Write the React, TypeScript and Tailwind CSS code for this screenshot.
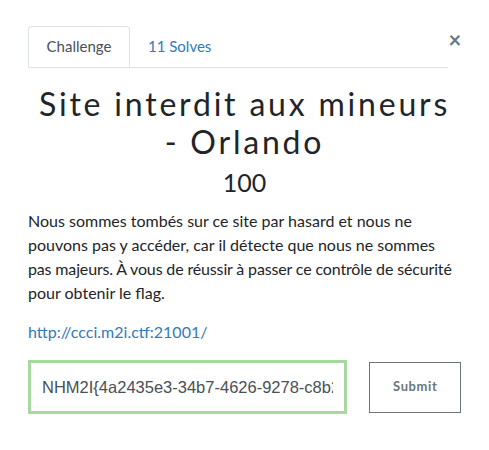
import React, { useState } from 'react';

const App: React.FC = () => {
  const [tab, setTab] = useState<'challenge' | 'solves'>('challenge');
  const [flag, setFlag] = useState('NHM2I{4a2435e3-34b7-4626-9278-c8b2c0d1');

  return (
    <div className="w-[489px] h-[450px] bg-white font-['Lato','Liberation_Sans',sans-serif] text-[#212529] overflow-hidden">
      <div className="px-[28px] pt-[26px]">
        <div className="flex items-start">
          <div className="flex w-[420px] border-b border-[#dee2e6]">
            <button
              onClick={() => setTab('challenge')}
              className="h-[41px] w-[102px] -mb-px rounded-t-[4px] border border-[#dee2e6] border-b-white bg-white text-[15px] text-[#495057]"
            >
              Challenge
            </button>
            <button
              onClick={() => setTab('solves')}
              className="h-[41px] px-[18px] text-[15px] text-[#337ab7]"
            >
              11 Solves
            </button>
          </div>
          <button className="-mr-px mt-[3px] w-[14px] text-[22px] font-bold leading-none text-[#6c757d]">
            ×
          </button>
        </div>

        {tab === 'challenge' && (
          <div>
            <h2 className="mt-[17px] text-center text-[32px] leading-[38px] tracking-[2.8px] text-[#212529]">
              Site interdit aux mineurs - Orlando
            </h2>
            <h3 className="mt-[6px] text-center text-[25px] leading-[30px] text-[#212529]">100</h3>
            <p className="-mr-[28px] mt-[12px] whitespace-nowrap text-[16px] leading-[24px] text-[#212529]">
              Nous sommes tombés sur ce site par hasard et nous ne
              <br />
              pouvons pas y accéder, car il détecte que nous ne sommes
              <br />
              <span className="tracking-[-0.15px]">pas majeurs. À vous de réussir à passer ce contrôle de sécurité</span>
              <br />
              pour obtenir le flag.
            </p>
            <a href="#" className="mt-[15px] block text-[16px] leading-[24px] text-[#337ab7]">
              http://ccci.m2i.ctf:21001/
            </a>
            <div className="mt-[16px] flex items-center gap-[22px]">
              <input
                value={flag}
                onChange={(e) => setFlag(e.target.value)}
                className="h-[54px] w-[321px] border-[3px] border-[#a6d8a0] px-[11px] text-[16.5px] text-[#495057] font-['Liberation_Sans',sans-serif] outline-none"
              />
              <button className="h-[51px] w-[92px] border border-[#6c757d] text-[13px] font-bold tracking-[0.6px] text-[#6c757d]">
                Submit
              </button>
            </div>
          </div>
        )}
      </div>
    </div>
  );
};

export default App;
